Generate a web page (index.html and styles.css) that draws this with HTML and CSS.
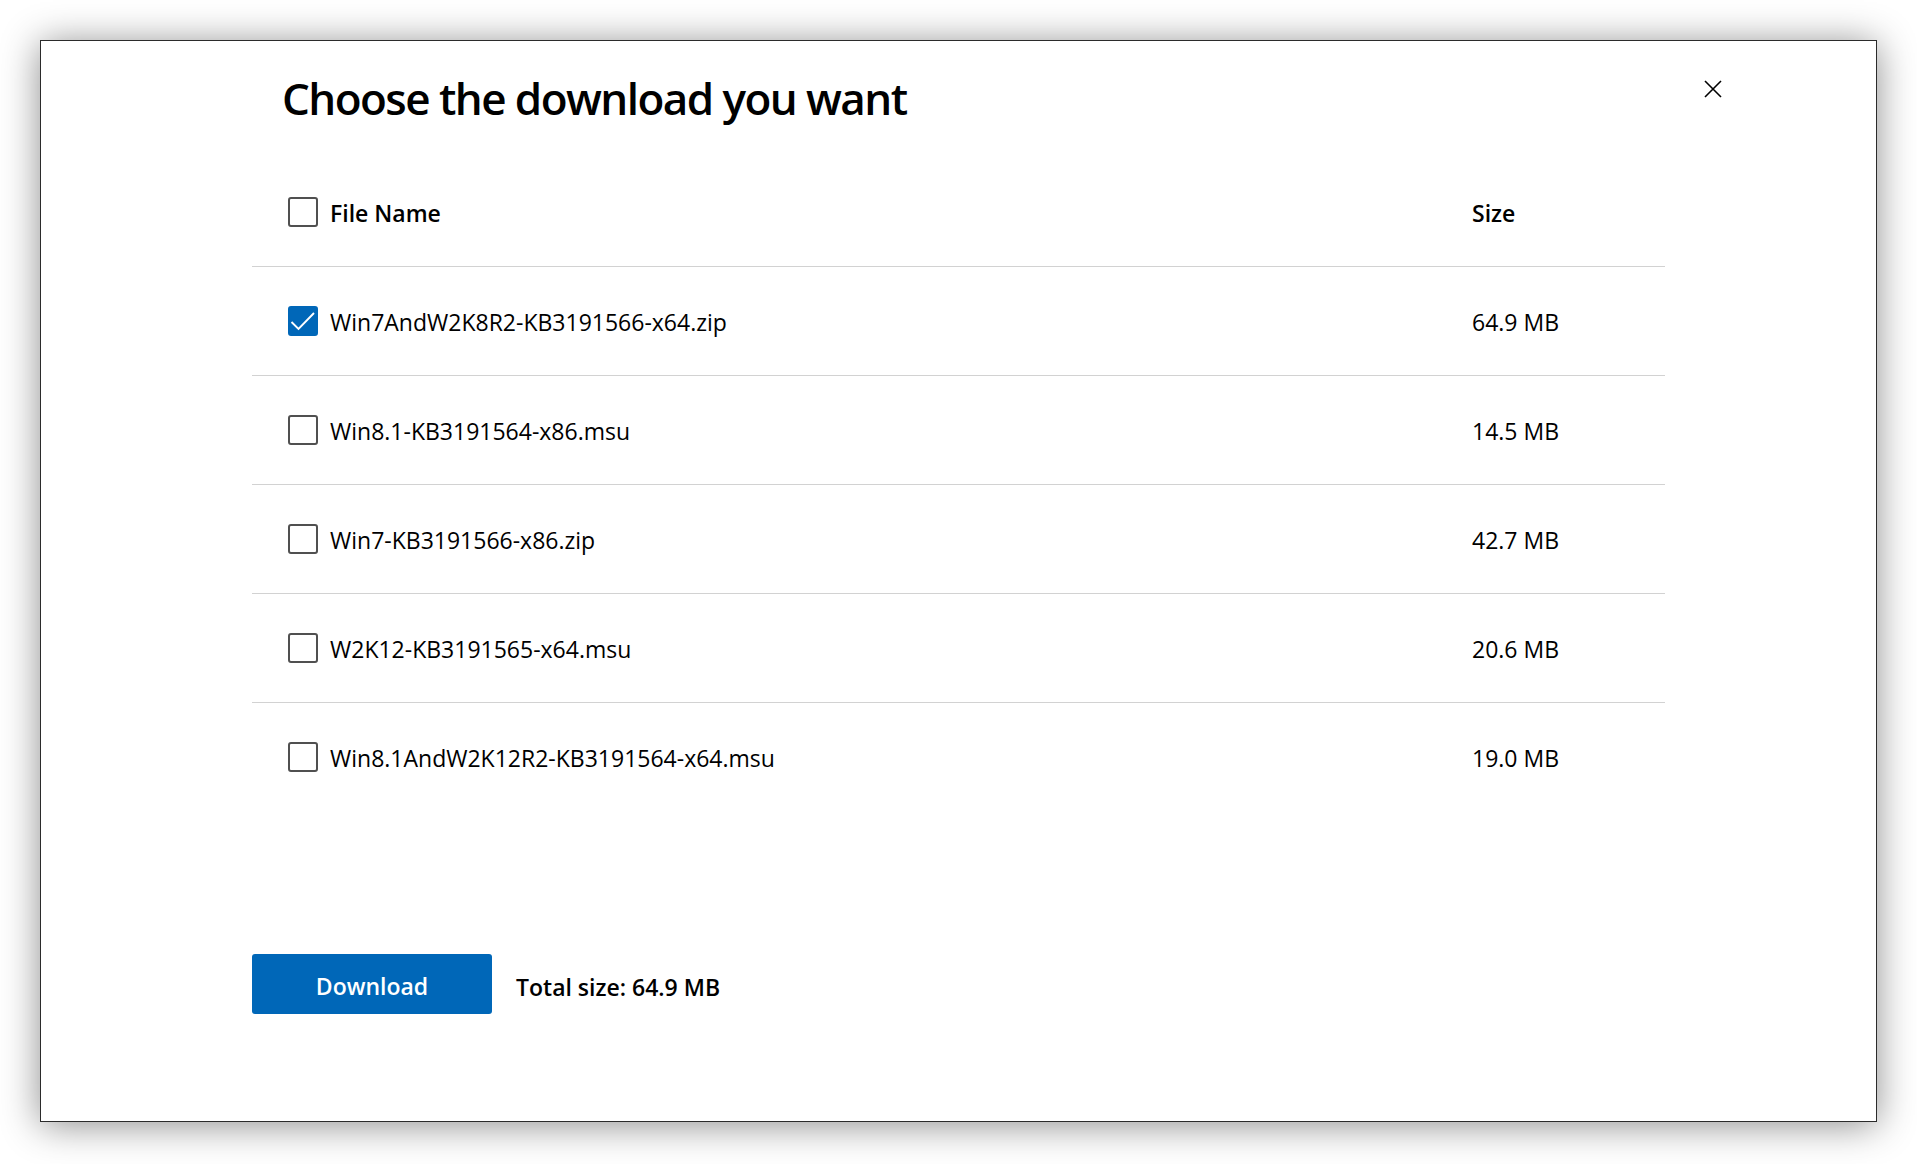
FILE: index.html
```html
<!DOCTYPE html>
<html lang="en">
<head>
<meta charset="utf-8">
<title>Choose the download you want</title>
<link rel="stylesheet" href="styles.css">
</head>
<body>
<div class="dialog">
  <button class="close" aria-label="Close">
    <svg width="18" height="18" viewBox="0 0 18 18"><path d="M1 1 L17 17 M17 1 L1 17" stroke="#000" stroke-width="1.6" fill="none"/></svg>
  </button>
  <h1 class="title">Choose the download you want</h1>
  <div class="table">
    <div class="row head">
      <div class="name"><span class="box"></span><span class="label">File Name</span></div>
      <div class="size">Size</div>
    </div>
    <div class="row">
      <div class="name"><span class="box checked"><svg width="30" height="30" viewBox="0 0 30 30"><path d="M3.5 16 L10.5 23 L26 7" stroke="#fff" stroke-width="1.9" fill="none"/></svg></span><span class="label">Win7AndW2K8R2-KB3191566-x64.zip</span></div>
      <div class="size">64.9 MB</div>
    </div>
    <div class="row">
      <div class="name"><span class="box"></span><span class="label">Win8.1-KB3191564-x86.msu</span></div>
      <div class="size">14.5 MB</div>
    </div>
    <div class="row">
      <div class="name"><span class="box"></span><span class="label">Win7-KB3191566-x86.zip</span></div>
      <div class="size">42.7 MB</div>
    </div>
    <div class="row">
      <div class="name"><span class="box"></span><span class="label">W2K12-KB3191565-x64.msu</span></div>
      <div class="size">20.6 MB</div>
    </div>
    <div class="row last">
      <div class="name"><span class="box"></span><span class="label">Win8.1AndW2K12R2-KB3191564-x64.msu</span></div>
      <div class="size">19.0 MB</div>
    </div>
  </div>
  <div class="footer">
    <button class="download">Download</button>
    <span class="total">Total size: 64.9 MB</span>
  </div>
</div>
</body>
</html>
```

FILE: styles.css
```css
html, body {
  margin: 0;
  padding: 0;
  background: #fff;
}
body {
  font-family: "Open Sans", "Noto Sans", sans-serif;
  color: #000;
  padding: 40px 0 0 40px;
  height: 1164px;
  box-sizing: border-box;
  overflow: hidden;
}
.dialog {
  position: relative;
  width: 1837px;
  height: 1082px;
  box-sizing: border-box;
  border: 1px solid #2b2b2b;
  background: #fff;
  box-shadow: 0 3px 36px rgba(0, 0, 0, 0.45);
  padding: 0 0 0 211px;
}
.close {
  position: absolute;
  top: 39px;
  left: 1663px;
  width: 18px;
  height: 18px;
  padding: 0;
  border: 0;
  background: none;
  display: block;
}
.close svg { display: block; }
.title {
  margin: 0;
  padding: 27px 0 0 30px;
  font-size: 44px;
  font-weight: 600;
  line-height: 60px;
  letter-spacing: -1.55px;
  height: 90px;
  box-sizing: content-box;
}
.table {
  width: 1413px;
}
.row {
  display: flex;
  align-items: center;
  height: 108px;
  border-bottom: 1px solid #d2d2d2;
  font-size: 23px;
}
.row.last { border-bottom: 0; }
.row.head { font-weight: 600; }
.name {
  display: flex;
  align-items: center;
  gap: 12px;
  width: 1220px;
  padding-left: 36px;
  box-sizing: border-box;
}
.label,
.size {
  padding-top: 2px;
}
.box {
  width: 30px;
  height: 30px;
  box-sizing: border-box;
  border: 2.5px solid #505050;
  border-radius: 3px;
  flex: none;
  position: relative;
}
.box.checked {
  background: #0067b8;
  border-color: #0067b8;
}
.box.checked svg {
  position: absolute;
  left: -2.5px;
  top: -2.5px;
}
.footer {
  display: flex;
  align-items: center;
  gap: 24px;
  margin-top: 143px;
}
.download {
  width: 240px;
  height: 60px;
  border: 0;
  border-radius: 3px;
  background: #0067b8;
  color: #fff;
  font-family: inherit;
  font-size: 23px;
  font-weight: 600;
  padding: 4px 0 0 0;
}
.total {
  font-size: 23px;
  font-weight: 600;
  padding-top: 5px;
}
```
